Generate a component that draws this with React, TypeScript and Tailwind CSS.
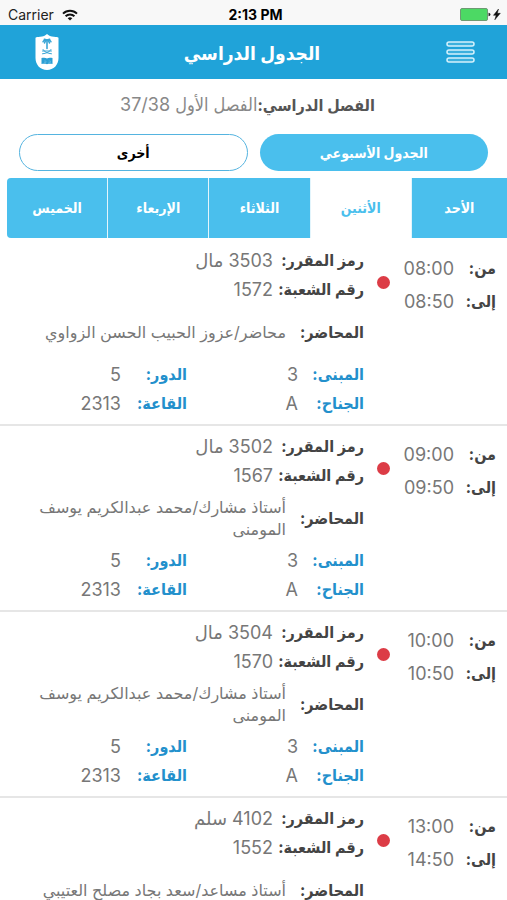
import React, { useState } from "react";

interface Lecture {
  id: string;
  from: string;
  to: string;
  course: string;
  section: string;
  lecturer: string;
  building: string;
  wing: string;
  floor: string;
  room: string;
}

const days = ["الأحد", "الأثنين", "الثلاثاء", "الإربعاء", "الخميس"];

const lectures: Lecture[] = [
  {
    id: "1572",
    from: "08:00",
    to: "08:50",
    course: "3503 مال",
    section: "1572",
    lecturer: "محاضر/عزوز الحبيب الحسن الزواوي",
    building: "3",
    wing: "A",
    floor: "5",
    room: "2313",
  },
  {
    id: "1567",
    from: "09:00",
    to: "09:50",
    course: "3502 مال",
    section: "1567",
    lecturer: "أستاذ مشارك/محمد عبدالكريم يوسف المومنى",
    building: "3",
    wing: "A",
    floor: "5",
    room: "2313",
  },
  {
    id: "1570",
    from: "10:00",
    to: "10:50",
    course: "3504 مال",
    section: "1570",
    lecturer: "أستاذ مشارك/محمد عبدالكريم يوسف المومنى",
    building: "3",
    wing: "A",
    floor: "5",
    room: "2313",
  },
  {
    id: "1552",
    from: "13:00",
    to: "14:50",
    course: "4102 سلم",
    section: "1552",
    lecturer: "أستاذ مساعد/سعد بجاد مصلح العتيبي",
    building: "3",
    wing: "A",
    floor: "5",
    room: "2313",
  },
];

const labelClass = "text-base leading-[29px] font-bold whitespace-nowrap text-[#444]";
const placeLabelClass = "text-base leading-[29px] font-bold whitespace-nowrap text-[#2390cc]";
const valueClass = "text-lg leading-[29px] text-[#777] font-[Inter,'DejaVu_Sans',sans-serif]";

const StatusBar: React.FC = () => (
  <div
    dir="ltr"
    className="grid h-[25px] shrink-0 grid-cols-3 items-center bg-[#f8f8f8] pt-1 pr-1 pl-2 text-sm text-[#222]"
  >
    <div className="flex items-center gap-2">
      <span>Carrier</span>
      <svg className="h-3 w-4" viewBox="0 0 16 12" fill="none" stroke="#111" strokeWidth="2">
        <path d="M1 4.6a10 10 0 0 1 14 0" />
        <path d="M3.6 7.3a6.2 6.2 0 0 1 8.8 0" />
        <path d="M8 11.6 5.7 9.3a3.3 3.3 0 0 1 4.6 0z" fill="#111" stroke="none" />
      </svg>
    </div>
    <span className="text-center font-bold text-black">2:13 PM</span>
    <svg className="h-4 w-11 justify-self-end" viewBox="0 0 44 16">
      <rect x="1.5" y="1.5" width="27" height="12" rx="1.5" fill="#4cd964" stroke="#6d9a72" />
      <path d="M29.5 5.7v3.6c1.4-.3 2-1 2-1.8s-.6-1.5-2-1.8z" fill="#222" />
      <path d="M39.5 2 34.5 8.3h2.7L35.8 12.8 41.3 6.3h-3z" fill="#111" stroke="#111" strokeWidth=".5" />
    </svg>
  </div>
);

const Logo: React.FC = () => (
  <svg className="h-9 w-6" viewBox="0 0 24 36">
    <path
      d="M12 0c1.5 1.6 4 2.5 7 2.8 2 .2 3.5.4 4.5.9V24c0 7-5 12-11.5 12S.5 31 .5 24V3.7C1.5 3.2 3 3 5 2.8 8 2.5 10.500 1.600 12 0z"
      fill="#fff"
    />
    <g fill="none" stroke="#3aa6d6" strokeLinecap="round">
      <path d="M12 6v8.5" strokeWidth="1.6" />
      <path d="M8 7.8c.6-1.600 2.200-2.300 4-1.800 1.800-.5 3.400.2 4 1.800M9.500 9c.3-1.500 1.200-2.500 2.500-3 1.300.5 2.200 1.500 2.500 3M9.300 5.200 12 6l2.700-.8" strokeWidth="1.5" />
      <path d="M8 15.500c1 2.200 4.500 4 8.500 4.300M16 15.500c-1 2.200-4.500 4-8.500 4.300M7.500 17h9" strokeWidth="1" />
    </g>
    <path d="M6.500 24c2.200-.6 4.200-.5 5.500.5 1.300-1 3.300-1.100 5.500-.5v6c-2-.4-4-.4-5.500.2-1.500-.6-3.500-.6-5.500-.2z" fill="#2b9fd4" />
    <path d="M9 27h2v1.500H9M13.500 27h2v1.500h-2" fill="none" stroke="#6cc0e5" strokeWidth=".6" />
  </svg>
);

const MenuIcon: React.FC = () => (
  <svg className="h-6 w-8" viewBox="0 0 32 24" fill="#3db0dd" stroke="#d5f1fc" strokeWidth="1.5">
    <rect x="2" y="2" width="27" height="4" rx="2" />
    <rect x="2" y="10" width="27" height="4" rx="2" />
    <rect x="2" y="18" width="27" height="4" rx="2" />
  </svg>
);

const LectureRow: React.FC<{ lecture: Lecture }> = ({ lecture }) => (
  <li className="flex min-h-[186px] border-b-2 border-[#e6e6e6] pr-[11px] pl-4">
    <dl className="grid w-[93px] shrink-0 grid-cols-[42px_1fr] content-start gap-y-1 pt-3.5">
      <dt className={labelClass}>من:</dt>
      <dd className={valueClass}>{lecture.from}</dd>
      <dt className={labelClass}>إلى:</dt>
      <dd className={valueClass}>{lecture.to}</dd>
    </dl>
    <span className="mx-[13px] mt-9 size-[13px] shrink-0 rounded-full bg-[#dc3c46]" />
    <dl className="flex-1 pt-1.5">
      <div className="flex">
        <dt className={`w-[91px] ${labelClass}`}>رمز المقرر:</dt>
        <dd className={valueClass}>{lecture.course}</dd>
      </div>
      <div className="flex">
        <dt className={`w-[91px] ${labelClass}`}>رقم الشعبة:</dt>
        <dd className={valueClass}>{lecture.section}</dd>
      </div>
      <div className="flex h-14 items-center">
        <dt className={`w-[78px] shrink-0 ${labelClass}`}>المحاضر:</dt>
        <dd className="text-base leading-[22px] text-[#777] font-[Inter,'DejaVu_Sans',sans-serif]">
          {lecture.lecturer}
        </dd>
      </div>
      <div className="grid grid-cols-[66px_111px_66px_1fr]">
        <dt className={placeLabelClass}>المبنى:</dt>
        <dd className={valueClass}>{lecture.building}</dd>
        <dt className={placeLabelClass}>الدور:</dt>
        <dd className={valueClass}>{lecture.floor}</dd>
        <dt className={placeLabelClass}>الجناح:</dt>
        <dd className={valueClass}>{lecture.wing}</dd>
        <dt className={placeLabelClass}>القاعة:</dt>
        <dd className={valueClass}>{lecture.room}</dd>
      </div>
    </dl>
  </li>
);

const App: React.FC = () => {
  const [selectedDay, setSelectedDay] = useState(1);

  return (
    <div
      dir="rtl"
      className="flex h-screen flex-col overflow-hidden bg-white font-[Inter,'DejaVu_Sans_Condensed','DejaVu_Sans',sans-serif]"
    >
      <StatusBar />

      <header className="flex h-[54px] shrink-0 items-center justify-between bg-[#20a3d9] pr-[30px] pl-[35px]">
        <button type="button" aria-label="القائمة">
          <MenuIcon />
        </button>
        <h1 className="pt-1 text-[19px] font-bold text-white">الجدول الدراسي</h1>
        <a href="#home" aria-label="الرئيسية">
          <Logo />
        </a>
      </header>

      <p className="flex h-[55px] shrink-0 items-center justify-center pr-3 pb-1 text-[#888]">
        <span className="text-base font-bold text-[#555]">الفصل الدراسي:</span>
        <span className="text-lg">الفصل الأول 37/38</span>
      </p>

      <div className="grid shrink-0 grid-cols-2 gap-3 px-[19px]">
        <button type="button" className="h-[37px] rounded-full bg-[#4abfed] text-sm font-bold text-white">
          الجدول الأسبوعي
        </button>
        <button type="button" className="h-[37px] rounded-full border border-[#55b4e0] text-sm font-bold text-black">
          أخرى
        </button>
      </div>

      {/* Day tabs */}
      <div className="mt-[7px] ml-[7px] grid h-[60px] shrink-0 grid-cols-[96fr_101fr_101fr_101fr_101fr] gap-px rounded-l-sm bg-[#e3f5fc]">
        {days.map((day, index) => (
          <button
            key={day}
            type="button"
            onClick={() => setSelectedDay(index)}
            className={`text-sm font-bold last:rounded-l-sm ${
              index === selectedDay ? "bg-white text-[#4abfed]" : "bg-[#4abfed] text-white"
            }`}
          >
            {day}
          </button>
        ))}
      </div>

      <ul className="mt-0.5 flex-1 overflow-y-auto [scrollbar-width:none]">
        {lectures.map((lecture) => (
          <LectureRow key={lecture.id} lecture={lecture} />
        ))}
      </ul>
    </div>
  );
};

export default App;
